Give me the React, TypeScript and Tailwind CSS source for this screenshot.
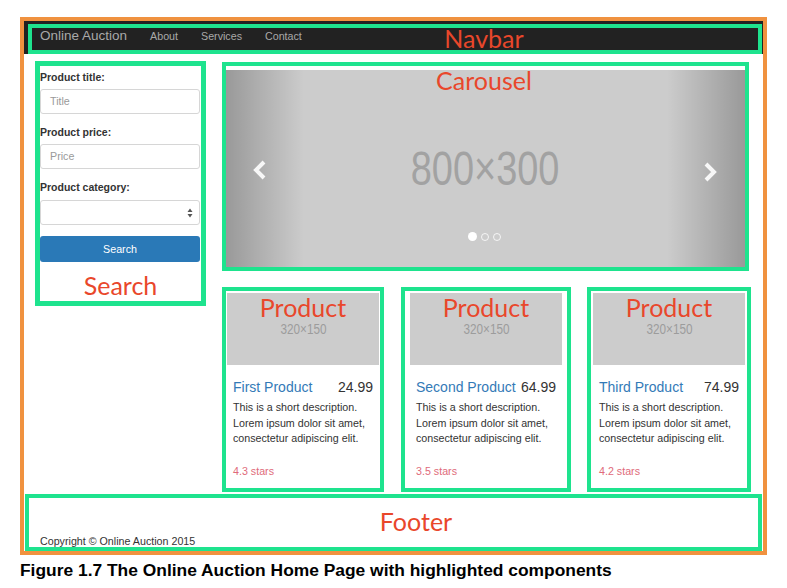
import React from "react";

const LABEL =
  "absolute font-['Lato',sans-serif] text-[25px] leading-[30px] text-[#e9472b] whitespace-nowrap -translate-x-1/2 pointer-events-none";

function Chevron({ dir }: { dir: "left" | "right" }) {
  return (
    <svg width="14" height="20" viewBox="0 0 14 20">
      <polyline
        points={dir === "left" ? "11,2 3,10 11,18" : "3,2 11,10 3,18"}
        fill="none"
        stroke="white"
        strokeOpacity="0.9"
        strokeWidth="4"
        strokeLinejoin="miter"
      />
    </svg>
  );
}

const cards = [
  { title: "First Product", price: "24.99", stars: "4.3 stars", w: "w-[162px]" },
  { title: "Second Product", price: "64.99", stars: "3.5 stars", w: "w-[170px]" },
  { title: "Third Product", price: "74.99", stars: "4.2 stars", w: "w-[164px]" },
];

function Field({ label, placeholder, first }: { label: string; placeholder: string; first?: boolean }) {
  return (
    <>
      <div className={(first ? "" : "mt-[11px] ") + "h-[15px] leading-[15px] text-[10.5px] font-bold text-[#333]"}>{label}</div>
      <div className="mt-[4px] w-[160px] h-[25px] border border-[#d6d6d6] rounded-[3px] bg-white flex items-center pl-[9px] text-[10.7px] text-[#9a9a9a]">
        {placeholder}
      </div>
    </>
  );
}

export default function App() {
  return (
    <div className="w-[787px] h-[588px] bg-white pt-[17px] pl-[20px] font-['Liberation_Sans',Arial,sans-serif] text-[#333] overflow-hidden">
      <div className="w-[747px] border-4 border-[#f0923f]">
        {/* Navbar */}
        <div className="bg-[#222] pt-[3px] pl-[4px] pr-[1px]">
          <div className="relative h-[30px] border-4 border-[#1ee38e] flex items-start pl-[8px] gap-[23px]">
            <span className="h-[16px] leading-[16px] text-[13.5px] text-[#a9a9a9]">Online Auction</span>
            <span className="h-[16px] leading-[16px] text-[10.7px] text-[#a9a9a9]">About</span>
            <span className="h-[16px] leading-[16px] text-[10.7px] text-[#a9a9a9]">Services</span>
            <span className="h-[16px] leading-[16px] text-[10.7px] text-[#a9a9a9]">Contact</span>
            <span className={LABEL + " left-[452px] top-[-5px]"}>Navbar</span>
          </div>
        </div>

        {/* Content */}
        <div className="h-[440px] flex">
          {/* Search */}
          <div className="pl-[11px]">
            <div className="mt-[7px] w-[171px] border-[5px] border-[#1ee38e] pt-[4px] pb-[1px] flex flex-col">
              <Field first label="Product title:" placeholder="Title" />
              <Field label="Product price:" placeholder="Price" />
              <div className="mt-[11px] h-[15px] leading-[15px] text-[10.5px] font-bold text-[#333]">Product category:</div>
              <div className="mt-[5px] w-[160px] h-[25px] border border-[#d6d6d6] rounded-[3px] bg-white flex items-center justify-end pr-[6px]">
                <svg width="6" height="10" viewBox="0 0 6 10">
                  <polygon points="3,0.5 5.5,4 0.5,4" fill="#555" />
                  <polygon points="3,9.5 5.5,6 0.5,6" fill="#555" />
                </svg>
              </div>
              <div className="mt-[11px] w-[160px] h-[26px] rounded-[3px] bg-[#2a79b7] flex items-center justify-center text-[10.7px] text-white">
                Search
              </div>
              <div className="mt-[8px] h-[30px] leading-[30px] text-center font-['Lato',sans-serif] text-[25px] text-[#e9472b]">
                Search
              </div>
            </div>
          </div>

          {/* Right column */}
          <div className="ml-[16px] flex flex-col">
            <div className="mt-[8px] w-[527px] border-4 border-[#1ee38e] pt-[4px]">
              <div className="relative w-[519px] h-[197px] bg-[#cccccc] flex items-center justify-center">
                <div className="absolute inset-y-0 left-0 w-[15%] bg-linear-to-r from-black/25 to-transparent" />
                <div className="absolute inset-y-0 right-0 w-[15%] bg-linear-to-l from-black/25 to-transparent" />
                <span className="relative inline-block scale-x-[0.79] text-[48px] leading-none text-[#a2a2a2]">800×300</span>
                <div className="absolute left-[27px] top-[90px]">
                  <Chevron dir="left" />
                </div>
                <div className="absolute left-[477px] top-[92px]">
                  <Chevron dir="right" />
                </div>
                <div className="absolute left-[242px] top-[162px] flex items-center gap-[4px]">
                  <span className="w-[9px] h-[9px] rounded-full bg-white" />
                  <span className="w-[8px] h-[8px] rounded-full border border-white/80" />
                  <span className="w-[8px] h-[8px] rounded-full border border-white/80" />
                </div>
                <span className={LABEL + " left-[258px] top-[-5px]"}>Carousel</span>
              </div>
            </div>

            <div className="mt-[16px] flex gap-[17px]">
              {cards.map((c, i) => (
                <div
                  key={c.title}
                  className={c.w + " h-[205px] border-4 border-[#1ee38e] " + (i === 2 ? "-ml-[1px]" : "")}
                >
                  <div className="w-[152px] mx-auto">
                    <div className="relative mt-[2px] h-[72px] bg-[#cccccc] flex items-center justify-center">
                      <span className="inline-block scale-x-[0.84] text-[14px] leading-none text-[#9c9c9c]">320×150</span>
                      <span className={LABEL + " left-1/2 top-[-1px]"}>Product</span>
                    </div>
                    <div className="px-[6px]">
                      <div className="mt-[13px] h-[18px] leading-[18px] flex justify-between text-[14px] whitespace-nowrap">
                        <span className="text-[#337ab7]">{c.title}</span>
                        <span className="text-[#333]">{c.price}</span>
                      </div>
                      <div className="mt-[4px] text-[10.7px] leading-[15.5px] text-[#333] whitespace-nowrap">
                        This is a short description.
                        <br />
                        Lorem ipsum dolor sit amet,
                        <br />
                        consectetur adipiscing elit.
                      </div>
                      <div className="mt-[17px] text-[10.7px] leading-[15.5px] text-[#e06a7a]">{c.stars}</div>
                    </div>
                  </div>
                </div>
              ))}
            </div>
          </div>
        </div>

        {/* Footer */}
        <div className="relative mx-[1px] h-[57px] border-4 border-[#1ee38e] pt-[36px] pl-[11px]">
          <div className="text-[10.7px] leading-[14px] text-[#333]">Copyright © Online Auction 2015</div>
          <span className={LABEL + " left-[387px] top-[8px]"}>Footer</span>
        </div>
      </div>

      <div className="mt-[5px] h-[20px] leading-[20px] text-[17.4px] font-bold text-black whitespace-nowrap">
        Figure 1.7 The Online Auction Home Page with highlighted components
      </div>
    </div>
  );
}
